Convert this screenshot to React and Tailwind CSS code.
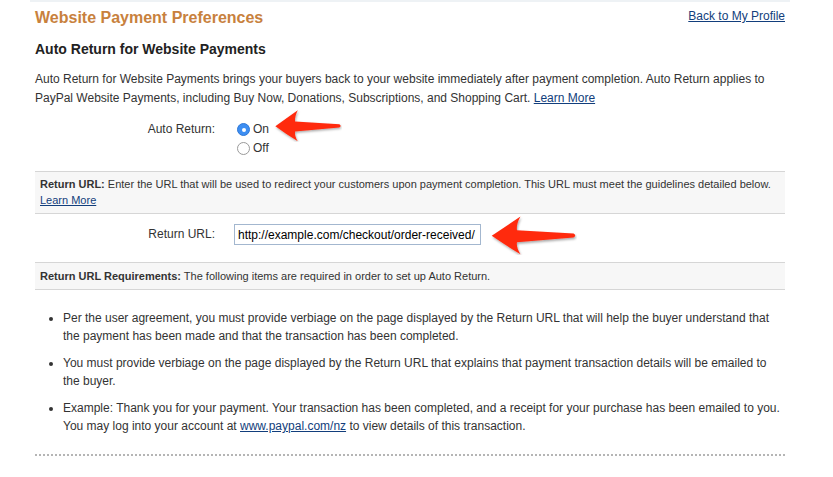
import React from "react";

function Arrow({ className }) {
  return (
    <svg className={className} viewBox="0 0 100 50" preserveAspectRatio="none">
      <defs>
        <filter id="sh" x="-10%" y="-20%" width="130%" height="150%">
          <feDropShadow dx="1" dy="2" stdDeviation="1.5" floodColor="#000" floodOpacity="0.35" />
        </filter>
      </defs>
      <path
        d="M2,26 Q20,13 35,2 Q30,12 31,19 L96,23 Q100,25.5 96,28 L31,34 Q30,41 35,49 Q18,38 2,26 Z"
        fill="#ff2a10"
        filter="url(#sh)"
      />
    </svg>
  );
}

function Radio({ checked }) {
  return checked ? (
    <span className="inline-flex w-[13px] h-[13px] rounded-full bg-[#3d8ef2] border border-[#2f78d6] items-center justify-center mr-[3px]">
      <span className="w-[4px] h-[4px] rounded-full bg-white" />
    </span>
  ) : (
    <span className="inline-block w-[13px] h-[13px] rounded-full bg-white border border-[#9a9a9a] mr-[3px]" />
  );
}

export default function App() {
  return (
    <div className="relative w-[833px] h-[477px] bg-white text-[#333] font-['Liberation_Sans',Arial,sans-serif]">
      <div className="ml-[30px] w-[760px] border-t-2 border-[#eef2f5] px-[5px]">
        <div className="flex justify-between items-start pt-[6px]">
          <h1 className="text-[16px] leading-[20px] font-bold text-[#c8813d]">Website Payment Preferences</h1>
          <a href="#" className="text-[12px] leading-[16px] text-[#123e7c] underline">
            Back to My Profile
          </a>
        </div>
        <h2 className="mt-[12px] text-[14px] leading-[18px] font-bold text-[#222]">
          Auto Return for Website Payments
        </h2>
        <p className="mt-[12px] text-[12px] leading-[19px]">
          Auto Return for Website Payments brings your buyers back to your website immediately after payment completion. Auto Return applies to PayPal Website Payments, including Buy Now, Donations, Subscriptions, and Shopping Cart.{" "}
          <a href="#" className="text-[#123e7c] underline">Learn More</a>
        </p>
        <div className="flex mt-[12px] text-[12px] leading-[19px]">
          <div className="w-[180px] text-right">Auto Return:</div>
          <div className="flex flex-col ml-[22px]">
            <label className="flex items-center"><Radio checked />On</label>
            <label className="flex items-center"><Radio />Off</label>
          </div>
        </div>
        <div className="mt-[13px] border-y border-[#d6d6d6] bg-[#f7f7f7] px-[5px] pt-[4px] pb-[5px] text-[11px] leading-[16px]">
          <b>Return URL:</b> Enter the URL that will be used to redirect your customers upon payment completion. This URL must meet the guidelines detailed below.
          <br />
          <a href="#" className="text-[#123e7c] underline">Learn More</a>
        </div>
        <div className="flex items-start h-[48px] pt-[10px] text-[12px]">
          <div className="w-[180px] text-right leading-[21px]">Return URL:</div>
          <div className="ml-[19px] w-[247px] h-[21px] border border-[#a3b7cf] px-[3px] flex items-center text-[12px] text-black">
            http://example.com/checkout/order-received/
          </div>
        </div>
        <div className="border-y border-[#d6d6d6] bg-[#f7f7f7] px-[5px] pt-[5px] pb-[5px] text-[11px] leading-[16px]">
          <b>Return URL Requirements:</b> The following items are required in order to set up Auto Return.
        </div>
        <ul className="mt-[19px] pl-[28px] list-disc text-[12px] leading-[18px] flex flex-col gap-[9px]">
          <li>Per the user agreement, you must provide verbiage on the page displayed by the Return URL that will help the buyer understand that the payment has been made and that the transaction has been completed.</li>
          <li>You must provide verbiage on the page displayed by the Return URL that explains that payment transaction details will be emailed to the buyer.</li>
          <li>
            Example: Thank you for your payment. Your transaction has been completed, and a receipt for your purchase has been emailed to you. You may log into your account at{" "}
            <a href="#" className="text-[#123e7c] underline">www.paypal.com/nz</a> to view details of this transaction.
          </li>
        </ul>
        <div className="mt-[19px] border-t-2 border-dotted border-[#b5b5b5]" />
      </div>
      <Arrow className="absolute left-[274px] top-[109px] w-[68px] h-[33px]" />
      <Arrow className="absolute left-[490px] top-[215px] w-[87px] h-[40px]" />
    </div>
  );
}
